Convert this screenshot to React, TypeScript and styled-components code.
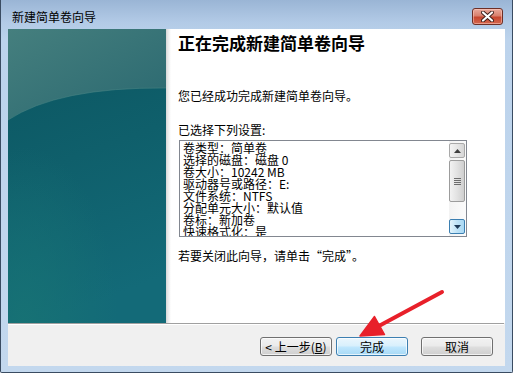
import React from 'react';
import styled, { createGlobalStyle } from 'styled-components';

const GlobalStyle = createGlobalStyle`
  html, body {
    margin: 0;
    padding: 0;
    background: #ffffff;
  }
  body {
    font-family: "Noto Sans CJK SC", "Noto Sans", sans-serif;
    font-size: 12px;
    color: #000;
  }
`;

const Page = styled.div`
  width: 513px;
  height: 375px;
  overflow: hidden;
  position: relative;
`;

const Window = styled.div`
  width: 513px;
  height: 373px;
  box-sizing: border-box;
  border: 1px solid #3a4c62;
  border-top: none;
  border-radius: 0 0 2px 2px;
  background: linear-gradient(to bottom, #9ab5d5 0px, #b2cae6 22px, #bcd3ec 40px, #c3d8ee 100%);
  display: flex;
  flex-direction: column;
  padding: 0 7px 6px 7px;
`;

const TitleBar = styled.div`
  height: 29px;
  display: flex;
  align-items: center;
  justify-content: space-between;
  padding: 0 2px 0 4px;
`;

const Title = styled.span`
  font-size: 12px;
  line-height: 14px;
  margin-top: 4px;
  color: #000;
`;

const CloseButton = styled.div`
  width: 31px;
  height: 17px;
  box-sizing: border-box;
  margin-top: 3px;
  border: 1px solid #6d2f26;
  border-radius: 3px;
  background: linear-gradient(to bottom, #e9a99c 0%, #d9806d 45%, #c7462f 55%, #d3674e 100%);
  box-shadow: inset 0 0 0 1px rgba(255, 210, 200, 0.5);
  display: flex;
  align-items: center;
  justify-content: center;
`;

const Client = styled.div`
  flex: 1;
  display: flex;
  flex-direction: column;
  background: #f0f0f0;
`;

const Main = styled.div`
  height: 294px;
  display: flex;
`;

const SidePanel = styled.div`
  width: 158px;
  height: 100%;
  flex-shrink: 0;
`;

const Content = styled.div`
  flex: 1;
  background: linear-gradient(to right, #d6d6d6 0px, #ebebeb 2px, #ffffff 5px);
  padding-left: 12px;
  display: flex;
  flex-direction: column;
`;

const Heading = styled.h1`
  margin: 4px 0 0 0;
  font-size: 17px;
  line-height: 20px;
  font-weight: bold;
`;

const Paragraph = styled.p<{ $top: number }>`
  margin: ${(p) => p.$top}px 0 0 0;
  font-size: 12px;
  line-height: 16px;
`;

const ListBox = styled.div`
  margin: 2px 0 0 1px;
  width: 288px;
  height: 97px;
  box-sizing: border-box;
  border: 1px solid #828790;
  background: #fff;
  display: flex;
`;

const ListText = styled.div`
  flex: 1;
  overflow: hidden;
  padding: 1px 0 0 3px;
  font-size: 12px;
  line-height: 12px;
  white-space: nowrap;
`;

const ListRow = styled.div`
  height: 12px;
`;

const ScrollBar = styled.div`
  width: 17px;
  display: flex;
  flex-direction: column;
  padding: 2px 1px 2px 0;
  box-sizing: border-box;
  background: linear-gradient(to right, #f3f3f3, #fbfbfb);
  gap: 2px;
`;

const ScrollButton = styled.div<{ $hot?: boolean }>`
  height: 15px;
  box-sizing: border-box;
  border: 1px solid ${(p) => (p.$hot ? '#3c7fb1' : '#a9a9a9')};
  border-radius: 2px;
  background: ${(p) =>
    p.$hot
      ? 'linear-gradient(to right, #e3f4fc, #bfe3f7 50%, #a9d8f3)'
      : 'linear-gradient(to right, #f4f4f4, #e6e6e6 50%, #d6d6d6)'};
  display: flex;
  align-items: center;
  justify-content: center;
`;

const Thumb = styled.div`
  height: 42px;
  box-sizing: border-box;
  border: 1px solid #9c9c9c;
  border-radius: 2px;
  background: linear-gradient(to right, #f2f2f2, #e2e2e2 50%, #cfcfcf);
  display: flex;
  align-items: center;
  justify-content: center;
`;

const Track = styled.div`
  flex: 1;
`;

const Separator = styled.div`
  height: 1px;
  background: #a0a0a0;
  border-bottom: 1px solid #ffffff;
  margin-right: 1px;
`;

const ButtonRow = styled.div`
  flex: 1;
  display: flex;
  justify-content: flex-end;
  align-items: flex-start;
  padding: 12px 12px 0 0;
`;

const Button = styled.button<{ $primary?: boolean; $gapAfter?: number }>`
  width: 72px;
  height: 19px;
  margin-right: ${(p) => p.$gapAfter ?? 0}px;
  padding: 0;
  box-sizing: border-box;
  font-family: "Noto Sans CJK SC", "Noto Sans", sans-serif;
  font-size: 12px;
  line-height: 15px;
  color: #000;
  border: 1px solid ${(p) => (p.$primary ? '#3c7fb1' : '#707070')};
  border-radius: 3px;
  background: ${(p) =>
    p.$primary
      ? 'linear-gradient(to bottom, #eaf6fd 0%, #d9f0fc 45%, #bee6fd 55%, #a7d9f5 100%)'
      : 'linear-gradient(to bottom, #f2f2f2 0%, #ebebeb 45%, #dddddd 55%, #cfcfcf 100%)'};
  box-shadow: inset 0 0 0 1px rgba(255, 255, 255, 0.7);
`;

const Arrow = styled.svg`
  position: absolute;
  left: 0;
  top: 0;
  pointer-events: none;
`;

const settings = [
  '卷类型：简单卷',
  '选择的磁盘：磁盘 0',
  '卷大小：10242 MB',
  '驱动器号或路径：E:',
  '文件系统：NTFS',
  '分配单元大小：默认值',
  '卷标：新加卷',
  '快速格式化：是',
];

const WizardArt: React.FC = () => (
  <svg width="158" height="294" viewBox="0 0 158 294">
    <defs>
      <linearGradient id="base" x1="0" y1="0" x2="0.2" y2="1">
        <stop offset="0" stopColor="#0b5560" />
        <stop offset="0.5" stopColor="#0f5f6b" />
        <stop offset="1" stopColor="#136a78" />
      </linearGradient>
      <linearGradient id="cap" x1="0" y1="0" x2="1" y2="1">
        <stop offset="0" stopColor="#457f7e" />
        <stop offset="1" stopColor="#2a6870" />
      </linearGradient>
      <radialGradient id="glow" cx="0.1" cy="1" r="0.6">
        <stop offset="0" stopColor="#177274" stopOpacity="0.9" />
        <stop offset="1" stopColor="#177274" stopOpacity="0" />
      </radialGradient>
    </defs>
    <rect width="158" height="294" fill="url(#base)" />
    <rect width="158" height="294" fill="url(#glow)" />
    <path d="M0 0 H158 V59 Q50 58 0 91 Z" fill="url(#cap)" />
    <path d="M0 91 Q50 58 158 59" fill="none" stroke="#4f8a88" strokeOpacity="0.5" strokeWidth="1" />
  </svg>
);

const App: React.FC = () => {
  return (
    <Page>
      <GlobalStyle />
      <Window>
        <TitleBar>
          <Title>新建简单卷向导</Title>
          <CloseButton>
            <svg width="13" height="11" viewBox="0 0 13 11">
              <path d="M2 1.5 L11 9.5 M11 1.5 L2 9.5" stroke="#3b1d19" strokeWidth="4" strokeLinecap="round" />
              <path d="M2 1.5 L11 9.5 M11 1.5 L2 9.5" stroke="#ffffff" strokeWidth="2.2" strokeLinecap="round" />
            </svg>
          </CloseButton>
        </TitleBar>
        <Client>
          <Main>
            <SidePanel>
              <WizardArt />
            </SidePanel>
            <Content>
              <Heading>正在完成新建简单卷向导</Heading>
              <Paragraph $top={35}>您已经成功完成新建简单卷向导。</Paragraph>
              <Paragraph $top={18}>已选择下列设置:</Paragraph>
              <ListBox>
                <ListText>
                  {settings.map((s) => (
                    <ListRow key={s}>{s}</ListRow>
                  ))}
                </ListText>
                <ScrollBar>
                  <ScrollButton>
                    <svg width="7" height="4" viewBox="0 0 7 4">
                      <path d="M0 4 L3.5 0 L7 4 Z" fill="#404040" />
                    </svg>
                  </ScrollButton>
                  <Thumb>
                    <svg width="7" height="7" viewBox="0 0 7 7">
                      <path d="M0 0.5 H7 M0 2.5 H7 M0 4.5 H7 M0 6.5 H7" stroke="#6d6d6d" strokeWidth="1" />
                    </svg>
                  </Thumb>
                  <Track />
                  <ScrollButton $hot>
                    <svg width="7" height="4" viewBox="0 0 7 4">
                      <path d="M0 0 L3.5 4 L7 0 Z" fill="#1e3a57" />
                    </svg>
                  </ScrollButton>
                </ScrollBar>
              </ListBox>
              <Paragraph $top={11}>若要关闭此向导，请单击“完成”。</Paragraph>
            </Content>
          </Main>
          <Separator />
          <ButtonRow>
            <Button $gapAfter={4}>&lt; 上一步(<u>B</u>)</Button>
            <Button $primary $gapAfter={13}>完成</Button>
            <Button>取消</Button>
          </ButtonRow>
        </Client>
      </Window>
      <Arrow width="513" height="375" viewBox="0 0 513 375">
        <path d="M442 292 L377 327" stroke="#e8202a" strokeWidth="4" strokeLinecap="round" />
        <path d="M360 336 L384.5 334.5 L374.5 316.5 Z" fill="#e8202a" stroke="#e8202a" strokeWidth="1.5" strokeLinejoin="round" />
      </Arrow>
    </Page>
  );
};

export default App;
